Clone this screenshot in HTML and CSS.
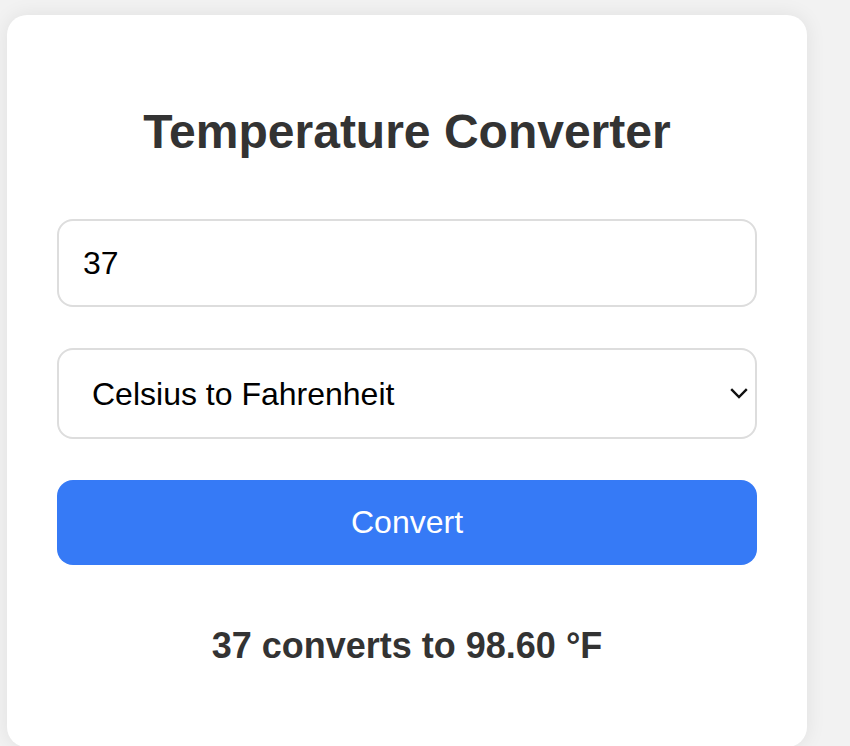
FILE: index.html
```html
<!DOCTYPE html>
<html lang="en">
<head>
<meta charset="utf-8">
<title>Temperature Converter</title>
<link rel="stylesheet" href="styles.css">
</head>
<body>
<main class="card">
  <h1 class="title">Temperature Converter</h1>
  <input class="field" type="number" value="37">
  <div class="select-wrap">
    <select class="field select">
      <option>Celsius to Fahrenheit</option>
      <option>Fahrenheit to Celsius</option>
    </select>
    <svg class="chevron" width="18" height="11" viewBox="0 0 18 11"><path d="M1.2 1.2 L9 9 L16.8 1.2" fill="none" stroke="#111" stroke-width="2.4"/></svg>
  </div>
  <button class="btn">Convert</button>
  <p class="result">37 converts to 98.60 °F</p>
</main>
</body>
</html>
```
FILE: styles.css
```css
html, body {
  margin: 0;
  padding: 0;
}
body {
  background: #f2f2f2;
  font-family: "Liberation Sans", Arial, sans-serif;
  padding: 15px 0 0 7px;
}
.card {
  width: 800px;
  box-sizing: border-box;
  background: #fff;
  border-radius: 20px;
  box-shadow: 0 0 20px rgba(0, 0, 0, 0.08);
  padding: 50px 50px 80px;
  display: flex;
  flex-direction: column;
}
.title {
  margin: 39px 0 60px;
  font-size: 48px;
  font-weight: bold;
  line-height: normal;
  color: #333;
  text-align: center;
}
.field {
  display: block;
  width: 100%;
  box-sizing: border-box;
  height: 88px;
  margin: 0;
  padding: 0 24px;
  border: 2px solid #ddd;
  border-radius: 16px;
  background: #fff;
  color: #000;
  font-family: "Liberation Sans", Arial, sans-serif;
  font-size: 32px;
  outline: none;
}
.select-wrap {
  position: relative;
  margin-top: 41px;
}
.select {
  height: 91px;
  padding-left: 33px;
  -webkit-appearance: none;
  appearance: none;
}
.chevron {
  position: absolute;
  right: 9px;
  top: 40px;
  pointer-events: none;
}
.btn {
  margin-top: 41px;
  height: 85px;
  border: none;
  border-radius: 16px;
  background: #367af6;
  color: #fff;
  font-family: "Liberation Sans", Arial, sans-serif;
  font-size: 32px;
}
.result {
  margin: 60px 0 0;
  font-size: 36px;
  font-weight: bold;
  line-height: normal;
  color: #333;
  text-align: center;
}
```
